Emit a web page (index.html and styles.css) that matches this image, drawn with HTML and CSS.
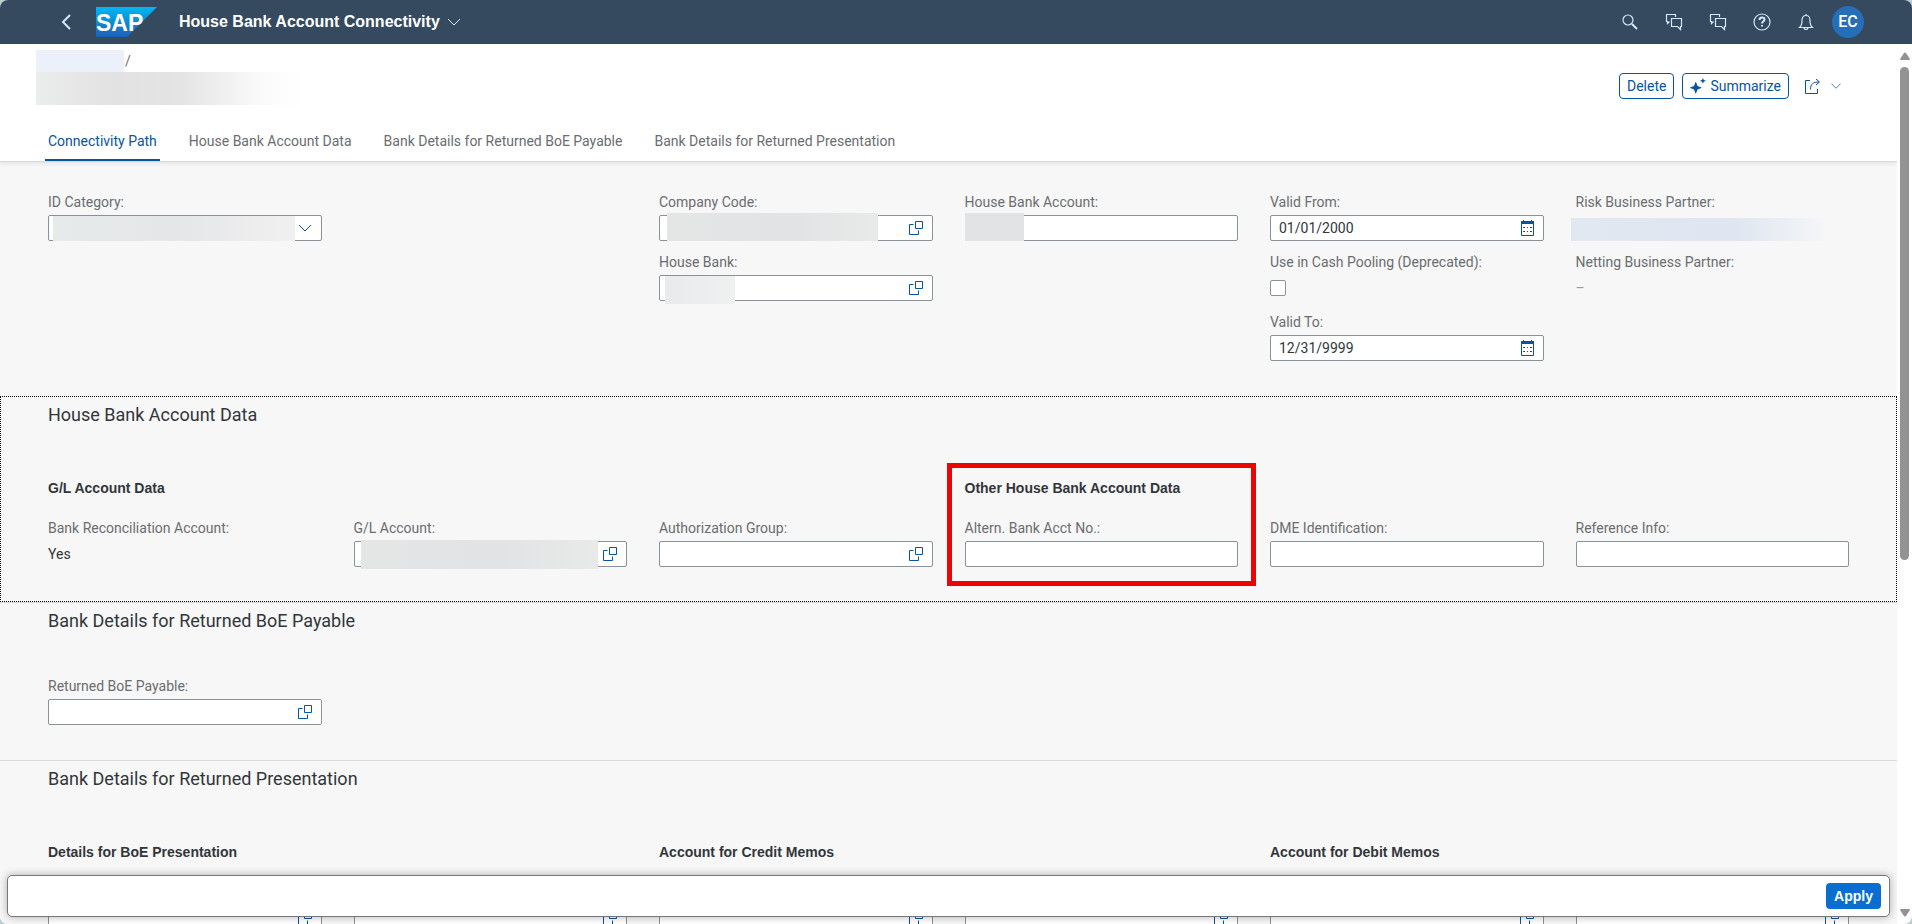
FILE: index.html
```html
<!DOCTYPE html>
<html lang="en">
<head>
    <meta charset="UTF-8">
    <meta name="viewport" content="width=device-width, initial-scale=1.0">
    <title>House Bank Account Connectivity</title>
    <link rel="stylesheet" href="styles.css">
</head>
<body>
    <!-- Shared icons -->
    <svg class="sprite" aria-hidden="true">
        <symbol id="icon-chevron" viewBox="0 0 16 16">
            <path d="M2 5l6 6 6-6"/>
        </symbol>
        <symbol id="icon-value-help" viewBox="0 0 16 16">
            <path d="M7.500 1.500h7v7h-7zM5.500 4.500h-4v10h9v-4"/>
        </symbol>
        <symbol id="icon-calendar" viewBox="0 0 16 16">
            <path d="M2.500 2.500h12v13h-12z"/>
            <path class="solid" d="M2 1h13v3H2zM4 7h2v1H4zM8 7h1v1H8zM11 7h2v1h-2zM4 11h2v1H4zM8 11h1v1H8zM11 11h2v1h-2zM4 0h1v1H4zM12 0h1v1h-1z"/>
        </symbol>
        <symbol id="icon-discussion" viewBox="0 0 18 18">
            <path d="M4.500 8.500l-2 2v-2h-1v-7h9v2.500M6.500 5.500h10v8h-1v3l-3-3h-6z"/>
        </symbol>
    </svg>

    <div class="app">
        <!-- Shell bar -->
        <header class="shell">
            <button class="shell-back" aria-label="Back">
                <svg width="10" height="16" viewBox="0 0 10 16"><path d="M9 1L2 8l7 7"/></svg>
            </button>
            <a class="logo" href="#" aria-label="SAP Home">
                <svg width="61" height="30" viewBox="0 0 61 30">
                    <defs>
                        <linearGradient id="logo-fill" x1="0" y1="0" x2="0" y2="1">
                            <stop offset="0" stop-color="#00b8f1"/>
                            <stop offset="1" stop-color="#1e5fbb"/>
                        </linearGradient>
                    </defs>
                    <path d="M0 0h61L31 30H0z" fill="url(#logo-fill)"/>
                    <text class="logo-text" x="0" y="24">SAP</text>
                </svg>
            </a>
            <button class="shell-title">
                House Bank Account Connectivity
                <svg width="16" height="16"><use href="#icon-chevron"/></svg>
            </button>
            <div class="shell-actions">
                <button aria-label="Search">
                    <svg width="16" height="16" viewBox="0 0 16 16"><circle cx="6" cy="6" r="5"/><path class="thick" d="M10 10l5 5"/></svg>
                </button>
                <button aria-label="Chat"><svg width="18" height="18"><use href="#icon-discussion"/></svg></button>
                <button aria-label="Discussion"><svg width="18" height="18"><use href="#icon-discussion"/></svg></button>
                <button aria-label="Help">
                    <svg width="18" height="18" viewBox="0 0 18 18"><circle cx="9" cy="9" r="8"/><path class="thick" d="M6.500 7c0-3.500 5-3.300 5-.5 0 2-2.500 2-2.500 4"/><path class="thick" d="M9 12v1.500"/></svg>
                </button>
                <button aria-label="Notifications">
                    <svg width="16" height="18" viewBox="0 0 16 18"><path d="M1.500 14.500h13c-2-1.500-2.500-3-2.500-7C12 4 10.500 2.500 8 2.500S4 4 4 7.500c0 4-.5 5.500-2.500 7zM8 1v1.500M6 15c.5 2 3.500 2 4 0"/></svg>
                </button>
                <button class="user" aria-label="User menu"><span class="avatar">EC</span></button>
            </div>
        </header>

        <div class="body">
            <main class="page">
                <!-- Object header -->
                <div class="page-header">
                    <div class="heading-row">
                        <div>
                            <div class="breadcrumb"><span class="mask mask-crumb"></span>/</div>
                            <div class="mask mask-title"></div>
                        </div>
                        <div class="toolbar">
                            <button class="btn">Delete</button>
                            <button class="btn">
                                <svg width="16" height="16" viewBox="0 0 18 18"><path d="M6.500 4L8.500 9l5 2-5 2-2 5-2-5-5-2 5-2zM14.500 0l1 2.200 2.500 1-2.500 1-1 2.300-1-2.300-2.500-1 2.500-1z"/></svg>
                                Summarize
                            </button>
                            <button class="btn-plain" aria-label="Share">
                                <svg width="17" height="17" viewBox="0 0 17 17"><path d="M6 2.500H1.500v13h12V11M6.500 11.500C6.500 6 9 4 15 4M12 1l3.500 3L12 7"/></svg>
                                <svg width="12" height="12"><use href="#icon-chevron"/></svg>
                            </button>
                        </div>
                    </div>
                    <nav class="tabs">
                        <a class="active" href="#path">Connectivity Path</a>
                        <a href="#account">House Bank Account Data</a>
                        <a href="#payable">Bank Details for Returned BoE Payable</a>
                        <a href="#presentation">Bank Details for Returned Presentation</a>
                    </nav>
                </div>

                <!-- Connectivity path -->
                <section class="section first" id="path">
                    <div class="form">
                        <div class="column wide">
                            <div class="field">
                                <label for="id-category">ID Category:</label>
                                <div class="control">
                                    <select id="id-category"><option></option></select>
                                    <svg class="icon" width="16" height="16"><use href="#icon-chevron"/></svg>
                                    <span class="mask mask-category"></span>
                                </div>
                            </div>
                        </div>
                        <div class="column">
                            <div class="field">
                                <label for="company-code">Company Code:</label>
                                <div class="control">
                                    <input type="text" id="company-code">
                                    <button class="icon" aria-label="Value help"><svg width="16" height="16"><use href="#icon-value-help"/></svg></button>
                                    <span class="mask mask-company"></span>
                                </div>
                            </div>
                            <div class="field">
                                <label for="house-bank">House Bank:</label>
                                <div class="control">
                                    <input type="text" id="house-bank">
                                    <button class="icon" aria-label="Value help"><svg width="16" height="16"><use href="#icon-value-help"/></svg></button>
                                    <span class="mask mask-bank"></span>
                                </div>
                            </div>
                        </div>
                        <div class="column">
                            <div class="field">
                                <label for="house-account">House Bank Account:</label>
                                <div class="control">
                                    <input type="text" id="house-account">
                                    <span class="mask mask-account"></span>
                                </div>
                            </div>
                        </div>
                        <div class="column">
                            <div class="field">
                                <label for="valid-from">Valid From:</label>
                                <div class="control">
                                    <input type="text" id="valid-from" value="01/01/2000">
                                    <button class="icon" aria-label="Open calendar"><svg width="16" height="16"><use href="#icon-calendar"/></svg></button>
                                </div>
                            </div>
                            <div class="field">
                                <label for="cash-pooling">Use in Cash Pooling (Deprecated):</label>
                                <div class="control"><input type="checkbox" id="cash-pooling"></div>
                            </div>
                            <div class="field">
                                <label for="valid-to">Valid To:</label>
                                <div class="control">
                                    <input type="text" id="valid-to" value="12/31/9999">
                                    <button class="icon" aria-label="Open calendar"><svg width="16" height="16"><use href="#icon-calendar"/></svg></button>
                                </div>
                            </div>
                        </div>
                        <div class="column">
                            <div class="field">
                                <span class="label">Risk Business Partner:</span>
                                <div class="control"><span class="mask mask-partner"></span></div>
                            </div>
                            <div class="field">
                                <span class="label">Netting Business Partner:</span>
                                <div class="control empty">–</div>
                            </div>
                        </div>
                    </div>
                </section>

                <!-- House bank account data -->
                <section class="section focused" id="account">
                    <h2>House Bank Account Data</h2>
                    <div class="form">
                        <div class="group half">
                            <h3>G/L Account Data</h3>
                            <div class="field">
                                <span class="label">Bank Reconciliation Account:</span>
                                <div class="control">Yes</div>
                            </div>
                            <div class="field">
                                <label for="gl-account">G/L Account:</label>
                                <div class="control">
                                    <input type="text" id="gl-account">
                                    <button class="icon" aria-label="Value help"><svg width="16" height="16"><use href="#icon-value-help"/></svg></button>
                                    <span class="mask mask-gl"></span>
                                </div>
                            </div>
                            <div class="field">
                                <label for="auth-group">Authorization Group:</label>
                                <div class="control">
                                    <input type="text" id="auth-group">
                                    <button class="icon" aria-label="Value help"><svg width="16" height="16"><use href="#icon-value-help"/></svg></button>
                                </div>
                            </div>
                        </div>
                        <div class="group half">
                            <h3>Other House Bank Account Data</h3>
                            <div class="field">
                                <label for="altern-account">Altern. Bank Acct No.:</label>
                                <div class="control"><input type="text" id="altern-account"></div>
                            </div>
                            <div class="field">
                                <label for="dme">DME Identification:</label>
                                <div class="control"><input type="text" id="dme"></div>
                            </div>
                            <div class="field">
                                <label for="reference">Reference Info:</label>
                                <div class="control"><input type="text" id="reference"></div>
                            </div>
                            <div class="highlight"></div>
                        </div>
                    </div>
                </section>

                <!-- Returned BoE payable -->
                <section class="section" id="payable">
                    <h2>Bank Details for Returned BoE Payable</h2>
                    <div class="form">
                        <div class="field">
                            <label for="boe-payable">Returned BoE Payable:</label>
                            <div class="control">
                                <input type="text" id="boe-payable">
                                <button class="icon" aria-label="Value help"><svg width="16" height="16"><use href="#icon-value-help"/></svg></button>
                            </div>
                        </div>
                    </div>
                </section>

                <!-- Returned presentation -->
                <section class="section" id="presentation">
                    <h2>Bank Details for Returned Presentation</h2>
                    <div class="form">
                        <div class="group third">
                            <h3>Details for BoE Presentation</h3>
                            <div class="field unlabeled">
                                <div class="control">
                                    <input type="text" aria-label="BoE presentation account">
                                    <button class="icon" aria-label="Value help"><svg width="16" height="16"><use href="#icon-value-help"/></svg></button>
                                </div>
                            </div>
                            <div class="field unlabeled">
                                <div class="control">
                                    <input type="text" aria-label="BoE presentation bank">
                                    <button class="icon" aria-label="Value help"><svg width="16" height="16"><use href="#icon-value-help"/></svg></button>
                                </div>
                            </div>
                        </div>
                        <div class="group third">
                            <h3>Account for Credit Memos</h3>
                            <div class="field unlabeled">
                                <div class="control">
                                    <input type="text" aria-label="Credit memo account">
                                    <button class="icon" aria-label="Value help"><svg width="16" height="16"><use href="#icon-value-help"/></svg></button>
                                </div>
                            </div>
                            <div class="field unlabeled">
                                <div class="control">
                                    <input type="text" aria-label="Credit memo bank">
                                    <button class="icon" aria-label="Value help"><svg width="16" height="16"><use href="#icon-value-help"/></svg></button>
                                </div>
                            </div>
                        </div>
                        <div class="group third">
                            <h3>Account for Debit Memos</h3>
                            <div class="field unlabeled">
                                <div class="control">
                                    <input type="text" aria-label="Debit memo account">
                                    <button class="icon" aria-label="Value help"><svg width="16" height="16"><use href="#icon-value-help"/></svg></button>
                                </div>
                            </div>
                            <div class="field unlabeled">
                                <div class="control">
                                    <input type="text" aria-label="Debit memo bank">
                                    <button class="icon" aria-label="Value help"><svg width="16" height="16"><use href="#icon-value-help"/></svg></button>
                                </div>
                            </div>
                        </div>
                    </div>
                </section>

                <footer class="footer-bar">
                    <button class="btn-primary">Apply</button>
                </footer>
            </main>

            <!-- Scrollbar -->
            <div class="scrollbar" aria-hidden="true">
                <svg width="10" height="8" viewBox="0 0 10 8"><path d="M4 1q1-1 2 0l4 6q0 1-1 1H1q-1 0-1-1z"/></svg>
                <div class="track"><div class="thumb"></div></div>
                <svg width="10" height="8" viewBox="0 0 10 8"><path d="M4 7q1 1 2 0l4-6q0-1-1-1H1q-1 0-1 1z"/></svg>
            </div>
        </div>
    </div>
</body>
</html>
```
FILE: styles.css
```css
/* General */
* {
    box-sizing: border-box;
}

body {
    margin: 0;
    font-family: Roboto, Arial, sans-serif;
    font-size: 14px;
    line-height: 20px;
    color: #32363a;
    background: #b9cfd1;
}

button,
input,
select {
    font: inherit;
    color: inherit;
}

button {
    display: flex;
    align-items: center;
    justify-content: center;
    padding: 0;
    border: 0;
    background: none;
    cursor: pointer;
}

svg {
    display: block;
    flex: none;
    fill: none;
    stroke: currentColor;
}

.sprite {
    position: absolute;
    width: 0;
    height: 0;
}

.app {
    display: flex;
    flex-direction: column;
    height: 100vh;
    border-radius: 8px;
    overflow: hidden;
    background: #fff;
}

/* Shell bar */
.shell {
    display: flex;
    align-items: center;
    flex: none;
    height: 44px;
    padding: 0 44px 0 48px;
    background: #354a5f;
    color: #d1e8ff;
}

.shell-back {
    width: 36px;
    height: 36px;
}

.shell-back svg {
    stroke-width: 2;
}

.logo {
    margin: 0 22px 0 12px;
}

.logo svg {
    stroke: none;
}

.logo-text {
    font-family: "Liberation Sans", Arial, sans-serif;
    font-size: 23px;
    font-weight: bold;
    fill: #fff;
}

.shell-title {
    gap: 6px;
    font-family: "Liberation Sans", Arial, sans-serif;
    font-size: 16px;
    font-weight: bold;
    color: #fff;
}

.shell-title svg {
    color: #d1e8ff;
}

.shell-actions {
    display: flex;
    margin-left: auto;
}

.shell-actions button {
    width: 44px;
    height: 36px;
}

.shell-actions .user {
    width: 40px;
}

.shell-actions svg {
    stroke-width: 1.2;
}

.shell-actions .thick {
    stroke-width: 2;
}

.avatar {
    width: 32px;
    height: 32px;
    border-radius: 50%;
    background: #256fb8;
    color: #fff;
    font-size: 16px;
    font-weight: 500;
    line-height: 32px;
}

/* Page layout */
.body {
    display: flex;
    flex: 1;
    min-height: 0;
}

.page {
    position: relative;
    flex: 1;
    min-width: 0;
    overflow: hidden;
    background: #f7f7f7;
}

.page-header {
    position: relative;
    height: 118px;
    border-bottom: 1px solid #d9d9d9;
    background: #fff;
    box-shadow: 0 2px 4px rgba(0, 0, 0, 0.08);
}

.heading-row {
    display: flex;
    justify-content: space-between;
    padding: 6px 48px 0 36px;
}

.breadcrumb {
    display: flex;
    align-items: center;
    gap: 1px;
    height: 22px;
    line-height: 22px;
    color: #6a6d70;
}

.toolbar {
    display: flex;
    align-items: center;
    gap: 8px;
    height: 26px;
    margin-top: 23px;
}

.btn {
    gap: 4px;
    height: 26px;
    padding: 0 7px;
    border: 1px solid #0854a0;
    border-radius: 4px;
    background: #fff;
    color: #0854a0;
}

.btn svg {
    fill: currentColor;
    stroke: none;
    overflow: visible;
}

.btn-plain {
    gap: 9px;
    padding: 0 7px;
    color: #0854a0;
}

/* Tabs */
.tabs {
    display: flex;
    gap: 26px;
    height: 40px;
    margin: 16px 45px 0;
}

.tabs a {
    padding: 10px 3px 0;
    border-bottom: 2px solid transparent;
    color: #6a6d70;
    text-decoration: none;
}

.tabs .active {
    border-color: #0854a0;
    color: #0854a0;
}

/* Sections */
.section {
    padding: 6px 48px 35px;
    border-top: 1px solid #d9d9d9;
}

.section.first {
    padding-top: 30px;
    border-top: 0;
}

.section.focused {
    padding-bottom: 34px;
    border: 1px dotted #000;
    padding-left: 47px;
    padding-right: 47px;
}

h2 {
    margin: 0 0 43px;
    font-size: 18px;
    font-weight: normal;
    line-height: 24px;
}

h3 {
    grid-column: 1 / -1;
    margin: 0 0 9px;
    font-family: "Liberation Sans", Arial, sans-serif;
    font-size: 14px;
    font-weight: bold;
}

.form {
    display: grid;
    grid-template-columns: repeat(6, minmax(0, 1fr));
    column-gap: 32px;
}

.group {
    position: relative;
    display: grid;
    grid-template-columns: subgrid;
    row-gap: 11px;
    margin-top: 8px;
}

.half {
    grid-column: span 3;
}

.third {
    grid-column: span 2;
}

.column {
    display: flex;
    flex-direction: column;
    gap: 11px;
}

.column.wide {
    grid-column: span 2;
    width: calc(50% - 16px);
}

/* Fields */
.field label,
.field .label {
    display: block;
    margin-bottom: 3px;
    color: #6a6d70;
    white-space: nowrap;
}

.unlabeled {
    padding-top: 23px;
}

.control {
    position: relative;
    display: flex;
    align-items: center;
    height: 26px;
}

.control.empty {
    color: #9a9c9e;
}

.control input[type="text"],
.control select {
    width: 100%;
    height: 26px;
    padding: 0 36px 0 8px;
    border: 1px solid #89919a;
    border-radius: 2px;
    background: #fff;
    appearance: none;
}

.control input[type="checkbox"] {
    width: 16px;
    height: 16px;
    margin: 0;
    border: 1px solid #89919a;
    border-radius: 2px;
    background: #fff;
    appearance: none;
}

.control .icon {
    position: absolute;
    top: 5px;
    right: 9px;
    color: #0854a0;
}

.solid {
    fill: currentColor;
    stroke: none;
}

/* Masked values */
.mask {
    background: linear-gradient(90deg, #e4e5e5, #e2e3e5 60%, #e8eae9);
}

.mask-crumb {
    width: 88px;
    height: 22px;
    background: #ebf0fa;
}

.mask-title {
    width: 264px;
    height: 33px;
    background: linear-gradient(90deg, #ebecec, #e2e2e2 30%, #e4e4e4 55%, #fafafa 85%, #fff);
}

.control .mask {
    position: absolute;
}

.control .mask-category {
    inset: 1px 27px 0 5px;
    background: linear-gradient(90deg, #e6eaeb, #e5e6e8 50%, #f0f0f0);
}

.control .mask-company {
    inset: -2px 55px 0 8px;
}

.control .mask-bank {
    inset: 1px auto -3px 6px;
    width: 70px;
    background: linear-gradient(90deg, #e9eaec, #eff0f0);
}

.control .mask-account {
    inset: -2px auto 0 0;
    width: 59px;
    background: #e2e3e5;
}

.control .mask-partner {
    inset: 3px 26px 0 -5px;
    background: linear-gradient(90deg, #e2e8f2, #dfe6f1 65%, #f4f5f7);
}

.control .mask-gl {
    inset: -1px 29px -2px 7px;
}

/* Call-out frame around the alternative account number */
.highlight {
    position: absolute;
    grid-column: 1 / 2;
    inset: -15px -18px -19px;
    border: 5px solid #eb0505;
    pointer-events: none;
}

/* Footer bar */
.footer-bar {
    position: absolute;
    left: 7px;
    right: 7px;
    bottom: 7px;
    display: flex;
    align-items: center;
    justify-content: flex-end;
    height: 42px;
    padding: 0 8px;
    border: 1px solid #75777a;
    border-radius: 5px;
    background: #fff;
    box-shadow: 0 0 8px rgba(0, 0, 0, 0.3);
}

.btn-primary {
    height: 26px;
    padding: 0 8px;
    border-radius: 4px;
    background: #0a6ed1;
    color: #fff;
    font-family: "Liberation Sans", Arial, sans-serif;
    font-weight: bold;
}

/* Scrollbar */
.scrollbar {
    display: flex;
    flex-direction: column;
    align-items: center;
    width: 15px;
    padding: 8px 0 7px;
    color: #939393;
}

.scrollbar svg {
    fill: currentColor;
    stroke: none;
}

.track {
    flex: 1;
    padding: 7px 0;
}

.thumb {
    width: 9px;
    height: 59%;
    border-radius: 5px;
    background: #939393;
}
```
